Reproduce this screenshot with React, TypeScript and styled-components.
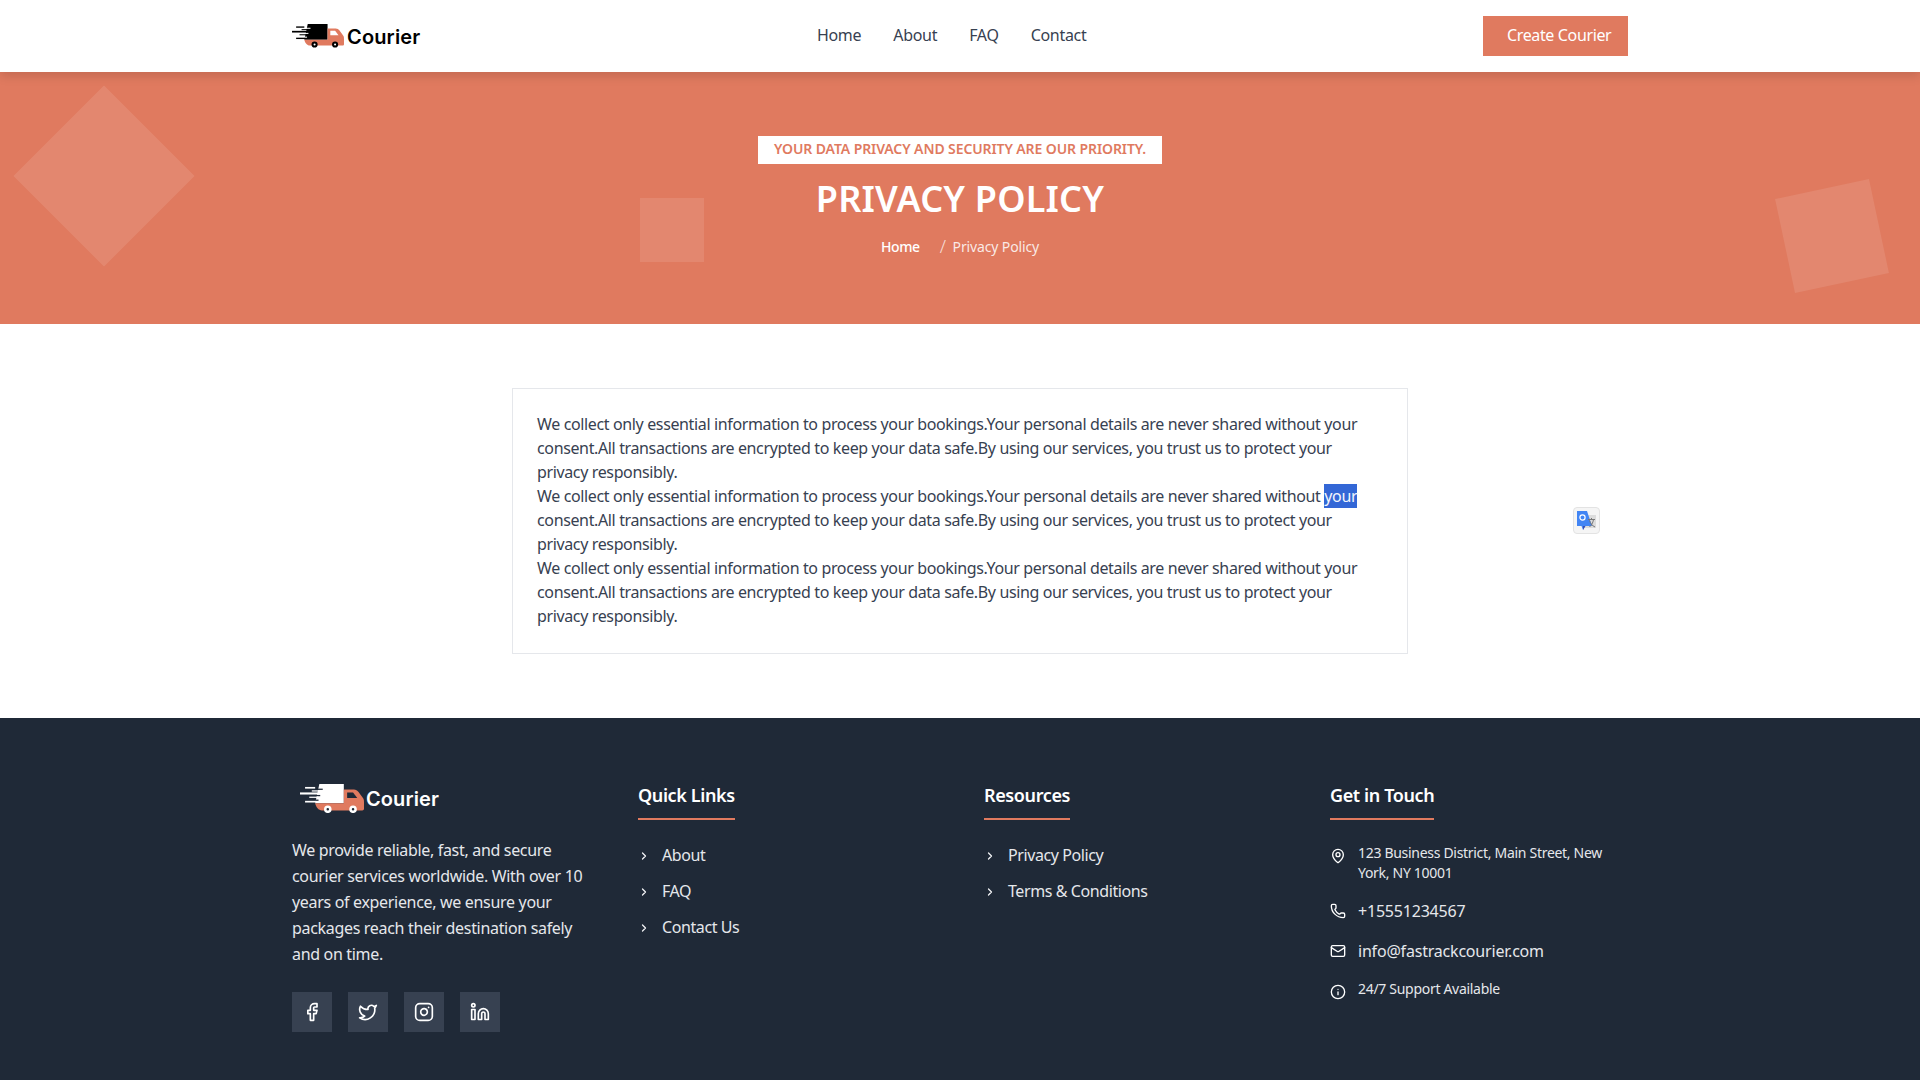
import React from "react";
import styled, { createGlobalStyle } from "styled-components";
import { MapPin, Phone, Mail, Info, ChevronRight, Facebook, Twitter, Instagram, Linkedin } from "lucide-react";

const Global = createGlobalStyle`
  * { box-sizing: border-box; }
  html, body { margin: 0; padding: 0; background: #fff; }
  body { font-family: "Noto Sans", "Open Sans", sans-serif; color: #374151; overflow-x: hidden; }
  ul { list-style: none; margin: 0; padding: 0; }
  a { color: inherit; text-decoration: none; }
`;

const Header = styled.header`
  position: relative;
  z-index: 5;
  height: 72px;
  background: #fff;
  box-shadow: 0 4px 10px rgba(0, 0, 0, 0.13);
`;
const Container = styled.div`
  width: 1336px;
  margin: 0 auto;
`;
const HeaderRow = styled(Container)`
  height: 72px;
  display: flex;
  align-items: center;
  justify-content: space-between;
`;
const LogoWrap = styled.a<{ $footer?: boolean }>`
  display: inline-flex;
  align-items: center;
  gap: ${(p) => (p.$footer ? "2px" : "3px")};
  font-family: Inter, sans-serif;
  font-weight: 600;
  font-size: 20px;
  letter-spacing: ${(p) => (p.$footer ? "0.1px" : "0.15px")};
  color: ${(p) => (p.$footer ? "#fff" : "#000")};
  ${(p) => p.$footer && "margin-left: 8px;"}
`;
const LogoText = styled.span`
  padding-top: 2px;
`;
const Nav = styled.nav`
  display: flex;
  gap: 32px;
  font-size: 16px;
  line-height: 24px;
  color: #374151;
  letter-spacing: -0.3px;
  padding-bottom: 2px;
`;
const CreateButton = styled.a`
  width: 145px;
  height: 40px;
  padding: 0 0 2px 24px;
  display: flex;
  align-items: center;
  background: #e07a5f;
  color: #fff;
  font-size: 16px;
  letter-spacing: -0.36px;
`;

const Hero = styled.section`
  position: relative;
  overflow: hidden;
  background: #e07a5f;
  padding: 64px 0 68px;
  text-align: center;
`;
const Shape = styled.div<{ $size: number; $top: number; $left: number; $rot: number }>`
  position: absolute;
  width: ${(p) => p.$size}px;
  height: ${(p) => p.$size}px;
  top: ${(p) => p.$top}px;
  left: ${(p) => p.$left}px;
  transform: rotate(${(p) => p.$rot}deg);
  background: rgba(255, 255, 255, 0.1);
`;
const Badge = styled.div`
  display: block;
  width: 404px;
  height: 28px;
  margin: 0 auto 16px;
  background: #fff;
  color: #e07a5f;
  font-size: 14px;
  font-weight: 600;
  line-height: 26px;
  letter-spacing: -0.1px;
  white-space: nowrap;
`;
const Title = styled.h1`
  margin: 0 0 16px;
  color: #fff;
  font-size: 36px;
  line-height: 38px;
  padding-bottom: 2px;
  font-weight: 600;
  letter-spacing: 0.2px;
`;
const Crumbs = styled.div`
  display: flex;
  justify-content: center;
  align-items: center;
  height: 20px;
  font-size: 14px;
  letter-spacing: -0.4px;
  color: #fff;
`;
const CrumbHome = styled.a`
  font-weight: 500;
`;
const CrumbSep = styled.span`
  margin: 0 7px 0 20px;
  font-size: 18px;
  font-weight: 300;
  color: rgba(255, 255, 255, 0.75);
`;
const CrumbCurrent = styled.span`
  letter-spacing: -0.14px;
  color: rgba(255, 255, 255, 0.85);
`;

const Main = styled.main`
  padding: 64px 0;
  background: #fff;
`;
const Card = styled.article`
  width: 896px;
  margin: 0 auto;
  padding: 23px 24px 25px;
  border: 1px solid #e5e7eb;
  font-size: 16px;
  line-height: 24px;
  color: #374151;
  letter-spacing: -0.365px;
`;
const Para = styled.p`
  margin: 0;
`;
const Selected = styled.span`
  display: inline-block;
  line-height: 24px;
  background: #3367d6;
  color: #f2f5fc;
`;
const TranslateBubble = styled.div`
  position: absolute;
  left: 1573px;
  top: 507px;
  width: 27px;
  height: 27px;
  z-index: 6;
  background: #f5f5f5;
  border: 1px solid #e3e3e3;
  border-radius: 4px;
  display: flex;
  align-items: center;
  justify-content: center;
`;

const Footer = styled.footer`
  background: #1f2937;
  padding: 64px 0 40px;
  min-height: 362px;
  color: #e5e7eb;
`;
const FooterGrid = styled(Container)`
  display: grid;
  grid-template-columns: repeat(4, 298px);
  gap: 48px;
`;
const BrandColumn = styled.div`
  margin-top: 2px;
`;
const Description = styled.p`
  margin: 19px 0 25px;
  font-size: 16px;
  line-height: 26px;
  letter-spacing: -0.32px;
`;
const Socials = styled.div`
  display: flex;
  gap: 16px;
`;
const SocialLink = styled.a`
  width: 40px;
  height: 40px;
  background: #374151;
  color: #fff;
  display: flex;
  align-items: center;
  justify-content: center;
`;
const Heading = styled.h3`
  display: inline-block;
  margin: 0 0 24px;
  padding-bottom: 9px;
  border-bottom: 2px solid #e07a5f;
  color: #fff;
  font-size: 18px;
  line-height: 27px;
  font-weight: 600;
  letter-spacing: -0.38px;
`;
const LinkList = styled.ul`
  display: flex;
  flex-direction: column;
  gap: 12px;
  margin-top: -1px;
`;
const LinkItem = styled.li`
  display: flex;
  align-items: center;
  gap: 12px;
  font-size: 16px;
  line-height: 24px;
  letter-spacing: -0.41px;
  color: #e5e7eb;
  svg { color: #f3f4f6; margin-top: 2px; }
`;
const ContactList = styled.ul`
  display: flex;
  flex-direction: column;
  margin-top: -1px;
`;
const ContactItem = styled.li<{ $small?: boolean; $gap: number }>`
  display: flex;
  align-items: flex-start;
  gap: 12px;
  margin-bottom: ${(p) => p.$gap}px;
  font-size: ${(p) => (p.$small ? "14px" : "16px")};
  line-height: ${(p) => (p.$small ? "20px" : "24px")};
  letter-spacing: ${(p) => (p.$small ? "-0.3px" : "-0.2px")};
  color: #e5e7eb;
  svg { flex: none; color: #fff; margin-top: ${(p) => (p.$small ? "5px" : "4px")}; }
`;

const Truck = ({ width, body, windowFill, hub }: { width: number; body: string; windowFill: string; hub: string }) => (
  <svg width={width} viewBox="0 0 152 68" fill="none" aria-hidden="true">
    <polygon points="46,0 104,0 104,46 36,46" fill={body} />
    <g fill={windowFill}>
      <rect x="36" y="11" width="18" height="3" />
      <rect x="32" y="26" width="16" height="3" />
      <rect x="32" y="37" width="12" height="3" />
    </g>
    <g fill={body}>
      <rect x="12" y="7" width="24" height="4" />
      <rect x="28" y="15" width="16" height="3" />
      <rect x="0" y="20" width="44" height="5" />
      <rect x="22" y="30" width="20" height="3" />
      <rect x="12" y="40" width="26" height="4" />
    </g>
    <path d="M36 46H104V13H128C133 13 136 15 139 19L150 34C152 37 152 40 152 44V59C152 62 150 63 148 63H52C44 63 38 55 36 46Z" fill="#e07a5f" />
    <path d="M112 20H126L136 33H112Z" fill={windowFill} />
    <circle cx="66" cy="60" r="6" fill={hub} stroke={body} strokeWidth="6" />
    <circle cx="126" cy="60" r="6" fill={hub} stroke={body} strokeWidth="6" />
  </svg>
);

const TranslateGlyph = () => (
  <svg width="21" height="21" viewBox="0 0 21 21" aria-hidden="true">
    <rect x="8" y="5" width="12" height="13" fill="#dcdcdc" />
    <path d="M1 1H11L16 16H9L7 20 5.5 16H1Z" fill="#4285f4" />
    <path d="M7 16H9.5L7 20Z" fill="#3a4fb0" />
    <circle cx="6.5" cy="7.5" r="2.6" fill="none" stroke="#fff" strokeWidth="1.2" />
    <path d="M12 9.5H19M15.5 8V9.5M13.5 17C15.5 15 17 13 17.5 9.5M13.5 10.5C14.5 13.5 16 15.5 19 17" stroke="#777" strokeWidth="1" fill="none" />
  </svg>
);

const Policy = ({ selected }: { selected?: boolean }) => (
  <Para>
    We collect only essential information to process your bookings.Your personal details are never shared without{" "}
    {selected ? <Selected>your</Selected> : "your"} consent.All transactions are encrypted to keep your data safe.By using our services, you trust us to protect your privacy responsibly.
  </Para>
);

export default function App() {
  return (
    <>
      <Global />
      <Header>
        <HeaderRow>
          <LogoWrap href="#">
            <Truck width={52} body="#000" windowFill="#fff" hub="#fff" />
            <LogoText>Courier</LogoText>
          </LogoWrap>
          <Nav>
            <a href="#">Home</a>
            <a href="#">About</a>
            <a href="#">FAQ</a>
            <a href="#">Contact</a>
          </Nav>
          <CreateButton href="#">Create Courier</CreateButton>
        </HeaderRow>
      </Header>

      <Hero>
        <Shape $size={128} $top={40} $left={40} $rot={45} />
        <Shape $size={64} $top={126} $left={640} $rot={0} />
        <Shape $size={96} $top={116} $left={1784} $rot={-12} />
        <Badge>YOUR DATA PRIVACY AND SECURITY ARE OUR PRIORITY.</Badge>
        <Title>PRIVACY POLICY</Title>
        <Crumbs>
          <CrumbHome href="#">Home</CrumbHome>
          <CrumbSep>/</CrumbSep>
          <CrumbCurrent>Privacy Policy</CrumbCurrent>
        </Crumbs>
      </Hero>

      <Main>
        <Card>
          <Policy />
          <Policy selected />
          <Policy />
        </Card>
      </Main>
      <TranslateBubble>
        <TranslateGlyph />
      </TranslateBubble>

      <Footer>
        <FooterGrid>
          <BrandColumn>
            <LogoWrap $footer href="#">
              <Truck width={64} body="#fff" windowFill="#1f2937" hub="#1f2937" />
              <LogoText>Courier</LogoText>
            </LogoWrap>
            <Description>
              We provide reliable, fast, and secure courier services worldwide. With over 10 years of experience, we ensure your packages reach their destination safely and on time.
            </Description>
            <Socials>
              <SocialLink href="#"><Facebook size={20} /></SocialLink>
              <SocialLink href="#"><Twitter size={20} /></SocialLink>
              <SocialLink href="#"><Instagram size={20} /></SocialLink>
              <SocialLink href="#"><Linkedin size={20} /></SocialLink>
            </Socials>
          </BrandColumn>
          <div>
            <Heading>Quick Links</Heading>
            <LinkList>
              <LinkItem><ChevronRight size={12} strokeWidth={2.5} />About</LinkItem>
              <LinkItem><ChevronRight size={12} strokeWidth={2.5} />FAQ</LinkItem>
              <LinkItem><ChevronRight size={12} strokeWidth={2.5} />Contact Us</LinkItem>
            </LinkList>
          </div>
          <div>
            <Heading>Resources</Heading>
            <LinkList>
              <LinkItem><ChevronRight size={12} strokeWidth={2.5} />Privacy Policy</LinkItem>
              <LinkItem><ChevronRight size={12} strokeWidth={2.5} />Terms &amp; Conditions</LinkItem>
            </LinkList>
          </div>
          <div>
            <Heading>Get in Touch</Heading>
            <ContactList>
              <ContactItem $small $gap={16}><MapPin size={16} /><span>123 Business District, Main Street, New<br />York, NY 10001</span></ContactItem>
              <ContactItem $gap={16}><Phone size={16} />+15551234567</ContactItem>
              <ContactItem $gap={16}><Mail size={16} />info@fastrackcourier.com</ContactItem>
              <ContactItem $small $gap={0}><Info size={16} />24/7 Support Available</ContactItem>
            </ContactList>
          </div>
        </FooterGrid>
      </Footer>
    </>
  );
}
